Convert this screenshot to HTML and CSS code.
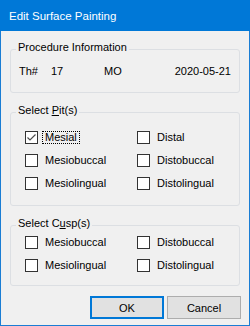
FILE: index.html
```html
<!DOCTYPE html>
<html>
<head>
	<meta charset="utf-8">
	<title>Edit Surface Painting</title>
	<link rel="stylesheet" href="styles.css">
</head>
<body>

<div class="window">
	<div class="titlebar">Edit Surface Painting</div>

	<div class="content">
		<fieldset class="group info">
			<legend>Procedure Information</legend>
			<div class="info-row">
				<span class="col-th">Th#</span>
				<span class="col-num">17</span>
				<span class="col-surf">MO</span>
				<span class="col-date">2020-05-21</span>
			</div>
		</fieldset>

		<fieldset class="group pits">
			<legend>Select <u>P</u>it(s)</legend>
			<div class="checks">
				<label class="check"><span class="box checked"><svg width="11" height="11" viewBox="0 0 11 11"><path d="M1.5 5.5 L4 8 L9.5 2.5" fill="none" stroke="#4d4d4d" stroke-width="1.2"/></svg></span><span class="text focus">Mesial</span></label>
				<label class="check"><span class="box"></span><span class="text">Distal</span></label>
				<label class="check"><span class="box"></span><span class="text">Mesiobuccal</span></label>
				<label class="check"><span class="box"></span><span class="text">Distobuccal</span></label>
				<label class="check"><span class="box"></span><span class="text">Mesiolingual</span></label>
				<label class="check"><span class="box"></span><span class="text">Distolingual</span></label>
			</div>
		</fieldset>

		<fieldset class="group cusps">
			<legend>Select C<u>u</u>sp(s)</legend>
			<div class="checks">
				<label class="check"><span class="box"></span><span class="text">Mesiobuccal</span></label>
				<label class="check"><span class="box"></span><span class="text">Distobuccal</span></label>
				<label class="check"><span class="box"></span><span class="text">Mesiolingual</span></label>
				<label class="check"><span class="box"></span><span class="text">Distolingual</span></label>
			</div>
		</fieldset>

		<div class="buttons">
			<button class="btn default">OK</button>
			<button class="btn">Cancel</button>
		</div>
	</div>
</div>

</body>
</html>
```

FILE: styles.css
```css
html, body {
	margin: 0;
	padding: 0;
}

body {
	font-family: "Liberation Sans", Arial, sans-serif;
	font-size: 11px;
	color: #000;
	background: #f0f0f0;
}

.window {
	width: 250px;
	height: 326px;
	box-sizing: border-box;
	border: 1px solid #1a7dd4;
	border-top: 0;
	background: #f0f0f0;
}

.titlebar {
	height: 31px;
	line-height: 32px;
	padding-left: 9px;
	margin: 0 -1px;
	background: #0078d7;
	color: #fff;
	font-size: 11.5px;
}

.content {
	padding: 9px 9px 0 9px;
}

/* group boxes */
.group {
	margin: 0;
	padding: 0;
	border: 1px solid #dcdfe3;
	border-radius: 3px;
	min-width: 0;
}

.group + .group {
	margin-top: 10px;
}

.group legend {
	margin-left: 5px;
	padding: 0 2px 4px 2px;
	line-height: 14px;
}

.info-row {
	display: flex;
	line-height: 14px;
	padding: 6px 8px 14px 8px;
}

.col-th { width: 32px; }
.col-num { width: 53px; }
.col-surf { flex: 1; }

.checks {
	display: grid;
	grid-template-columns: 112px 1fr;
	row-gap: 10px;
	padding-left: 14px;
}

.pits .checks {
	padding-top: 10px;
	padding-bottom: 15px;
}

.cusps .checks {
	padding-top: 2px;
	padding-bottom: 13px;
}

.check {
	display: flex;
	align-items: center;
	height: 13px;
}

.box {
	width: 13px;
	height: 13px;
	box-sizing: border-box;
	border: 1px solid #333;
	background: #fff;
	flex: none;
}

.box svg {
	display: block;
}

.text {
	margin-left: 4px;
	padding: 0 2px;
	line-height: 11px;
	border: 1px solid transparent;
}

.text.focus {
	border: 1px dotted #000;
}

/* buttons */
.buttons {
	display: flex;
	justify-content: flex-end;
	gap: 3px;
	margin-top: 10px;
	margin-right: -1px;
}

.btn {
	width: 74px;
	height: 23px;
	box-sizing: border-box;
	padding: 0;
	font-family: "Liberation Sans", Arial, sans-serif;
	font-size: 11px;
	color: #000;
	background: #e1e1e1;
	border: 1px solid #adadad;
	border-radius: 0;
}

.btn.default {
	border: 2px solid #0078d7;
}
```
